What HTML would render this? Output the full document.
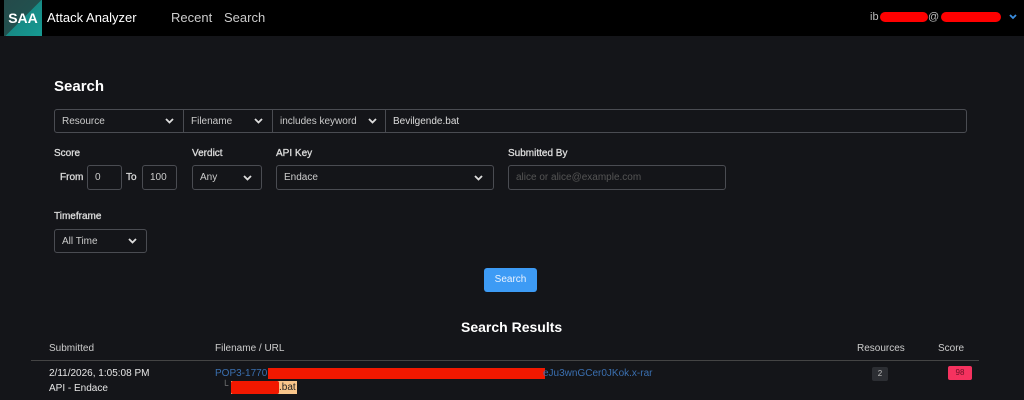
<!DOCTYPE html>
<html><head><meta charset="utf-8"><style>
*{box-sizing:border-box;margin:0;padding:0}
body{width:1024px;height:400px;overflow:hidden;background:#141519;font-family:"Liberation Sans",sans-serif;color:#e6e6e6;position:relative}
.a{position:absolute}
.nav{left:0;top:0;width:1024px;height:36px;background:#000}
.logo{left:4px;top:0;width:38px;height:36px;background:linear-gradient(135deg,#244a4a 0%,#22504e 50%,#178a85 51%,#169a92 100%);color:#fff;font-weight:bold;font-size:14px;line-height:36px;text-align:center}
.box{border:1px solid #4a4c52;border-radius:3px;background:#141519;font-size:10px;color:#ccc;display:flex;align-items:center;padding-left:7px}
.lbl{font-size:10px;font-weight:normal;color:#ddd;-webkit-text-stroke:0.3px #ddd}
</style></head><body>
<div class="a nav"></div>
<div class="a logo">SAA</div>
<div class="a" style="left:47px;top:10px;font-size:13px;color:#fff">Attack Analyzer</div>
<div class="a" style="left:171px;top:10px;font-size:13px;color:#ccc">Recent</div>
<div class="a" style="left:224px;top:10px;font-size:13px;color:#ccc">Search</div>
<div class="a" style="left:870px;top:11px;font-size:11px;color:#bbb">ib</div>
<div class="a" style="left:880px;top:12px;width:48px;height:10px;background:#f00;border-radius:5px"></div>
<div class="a" style="left:928px;top:11px;font-size:11px;color:#bbb">@</div>
<div class="a" style="left:941px;top:12px;width:60px;height:10px;background:#f00;border-radius:5px"></div>
<svg class="a" style="left:1009px;top:14px" width="8" height="6"><path d="M1 1L4 4L7 1" stroke="#3b8ee0" stroke-width="1.8" fill="none"/></svg>

<div class="a" style="left:54px;top:78px;font-size:15px;font-weight:bold;color:#fff">Search</div>

<div class="a box" style="left:54px;top:109px;width:913px;height:24px"></div>
<div class="a" style="left:183px;top:110px;width:1px;height:22px;background:#4a4c52"></div>
<div class="a" style="left:272px;top:110px;width:1px;height:22px;background:#4a4c52"></div>
<div class="a" style="left:385px;top:110px;width:1px;height:22px;background:#4a4c52"></div>
<div class="a" style="left:62px;top:116px;font-size:10px;color:#ccc">Resource</div>
<div class="a" style="left:191px;top:116px;font-size:10px;color:#ccc">Filename</div>
<div class="a" style="left:280px;top:116px;font-size:10px;color:#ccc">includes keyword</div>
<div class="a" style="left:393px;top:116px;font-size:10px;color:#ddd">Bevilgende.bat</div>
<svg class="a" style="left:165px;top:118px" width="9" height="6"><path d="M1 1L4.5 4.5L8 1" stroke="#ddd" stroke-width="1.8" fill="none"/></svg>
<svg class="a" style="left:254px;top:118px" width="9" height="6"><path d="M1 1L4.5 4.5L8 1" stroke="#ddd" stroke-width="1.8" fill="none"/></svg>
<svg class="a" style="left:368px;top:118px" width="9" height="6"><path d="M1 1L4.5 4.5L8 1" stroke="#ddd" stroke-width="1.8" fill="none"/></svg>

<div class="a lbl" style="left:54px;top:148px">Score</div>
<div class="a lbl" style="left:192px;top:148px">Verdict</div>
<div class="a lbl" style="left:276px;top:148px">API Key</div>
<div class="a lbl" style="left:508px;top:148px">Submitted By</div>
<div class="a lbl" style="left:60px;top:172px">From</div>
<div class="a box" style="left:87px;top:165px;width:35px;height:25px">0</div>
<div class="a lbl" style="left:126px;top:172px">To</div>
<div class="a box" style="left:142px;top:165px;width:35px;height:25px">100</div>
<div class="a box" style="left:192px;top:165px;width:70px;height:25px">Any</div>
<svg class="a" style="left:243px;top:175px" width="9" height="6"><path d="M1 1L4.5 4.5L8 1" stroke="#ddd" stroke-width="1.8" fill="none"/></svg>
<div class="a box" style="left:276px;top:165px;width:218px;height:25px">Endace</div>
<svg class="a" style="left:474px;top:175px" width="9" height="6"><path d="M1 1L4.5 4.5L8 1" stroke="#ddd" stroke-width="1.8" fill="none"/></svg>
<div class="a box" style="left:508px;top:165px;width:218px;height:25px;color:#555">alice or alice@example.com</div>

<div class="a lbl" style="left:54px;top:211px">Timeframe</div>
<div class="a box" style="left:54px;top:229px;width:93px;height:24px">All Time</div>
<svg class="a" style="left:128px;top:238px" width="9" height="6"><path d="M1 1L4.5 4.5L8 1" stroke="#ddd" stroke-width="1.8" fill="none"/></svg>

<div class="a" style="left:484px;top:268px;width:53px;height:24px;background:#3d9bf5;border-radius:3px;color:#e8f2ff;font-size:10px;text-align:center;line-height:24px">Search</div>

<div class="a" style="left:461px;top:319px;font-size:14px;font-weight:bold;color:#fff">Search Results</div>
<div class="a" style="left:49px;top:343px;font-size:10px;color:#ccc">Submitted</div>
<div class="a" style="left:215px;top:343px;font-size:10px;color:#ccc">Filename / URL</div>
<div class="a" style="left:857px;top:343px;font-size:10px;color:#ccc">Resources</div>
<div class="a" style="left:938px;top:343px;font-size:10px;color:#ccc">Score</div>
<div class="a" style="left:31px;top:360px;width:948px;height:1px;background:#444"></div>
<div class="a" style="left:49px;top:368px;font-size:10px;color:#e6e6e6">2/11/2026, 1:05:08 PM</div>
<div class="a" style="left:49px;top:383px;font-size:10px;color:#e6e6e6">API - Endace</div>
<div class="a" style="left:215px;top:368px;font-size:10px;color:#3a6fb0">POP3-1770</div>
<div class="a" style="left:268px;top:368px;width:277px;height:11px;background:#f21800"></div>
<div class="a" style="left:543px;top:368px;font-size:10px;color:#3a6fb0">eJu3wnGCer0JKok.x-rar</div>
<div class="a" style="left:222px;top:380px;font-size:9px;color:#888">└</div>
<div class="a" style="left:231px;top:381px;width:66px;height:13px;background:#f8c58a"></div>
<div class="a" style="left:231px;top:381px;width:48px;height:13px;background:#f21800;border-radius:2px"></div>
<div class="a" style="left:279px;top:382px;font-size:10px;color:#222">.bat</div>
<div class="a" style="left:872px;top:367px;width:16px;height:14px;background:#2c2e33;border-radius:2px;font-size:8px;color:#bbb;text-align:center;line-height:14px">2</div>
<div class="a" style="left:948px;top:366px;width:24px;height:14px;background:#f5325f;border-radius:2px;font-size:8px;color:#6a1026;text-align:center;line-height:14px">98</div>
</body></html>
